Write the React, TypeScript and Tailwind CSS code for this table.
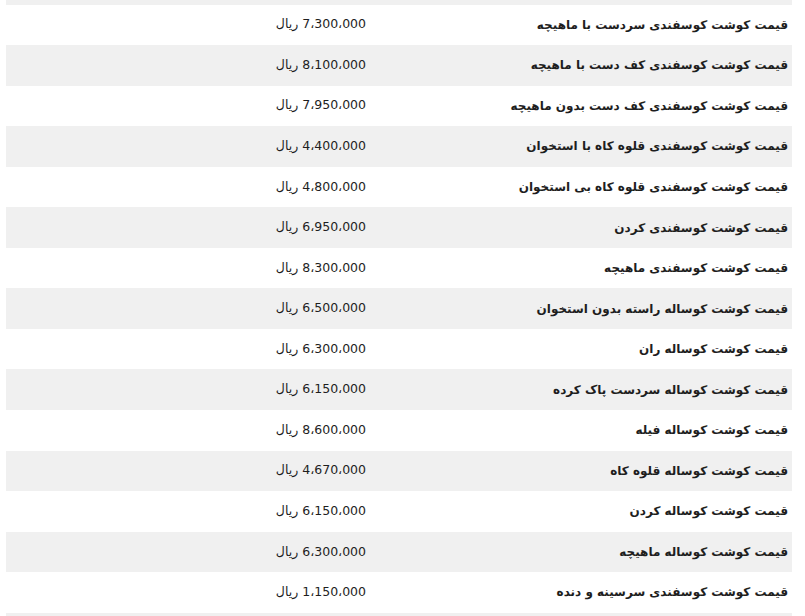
const rows: [string, string][] = [
    ["قیمت کوشت کوسفندی سردست با ماهیچه", "7،300،000"],
    ["قیمت کوشت کوسفندی کف دست با ماهیچه", "8،100،000"],
    ["قیمت کوشت کوسفندی کف دست بدون ماهیچه", "7،950،000"],
    ["قیمت کوشت کوسفندی قلوه کاه با استخوان", "4،400،000"],
    ["قیمت کوشت کوسفندی قلوه کاه بی استخوان", "4،800،000"],
    ["قیمت کوشت کوسفندی کردن", "6،950،000"],
    ["قیمت کوشت کوسفندی ماهیچه", "8،300،000"],
    ["قیمت کوشت کوساله راسته بدون استخوان", "6،500،000"],
    ["قیمت کوشت کوساله ران", "6،300،000"],
    ["قیمت کوشت کوساله سردست پاک کرده", "6،150،000"],
    ["قیمت کوشت کوساله فیله", "8،600،000"],
    ["قیمت کوشت کوساله قلوه کاه", "4،670،000"],
    ["قیمت کوشت کوساله کردن", "6،150،000"],
    ["قیمت کوشت کوساله ماهیچه", "6،300،000"],
    ["قیمت کوشت کوسفندی سرسینه و دنده", "1،150،000"],
];

export default function App() {
    return (
        <div
            className="h-[616px] w-[805px] overflow-hidden bg-white"
            style={{ fontFamily: '"DejaVu Sans", sans-serif' }}
        >
            <div dir="rtl" className="ml-[6px] w-[786px]">
                {/* tail of the previous row */}
                <div className="h-[4.5px] bg-[#f0f0f0]" />
                {rows.map(([name, price], i) => (
                    <div
                        key={i}
                        className={`grid h-[40.55px] grid-cols-[420px_1fr] items-center text-[#1e1e1e] ${
                            i % 2 === 1 ? "bg-[#f0f0f0]" : "bg-white"
                        }`}
                    >
                        <span className="pr-[4px] text-[12px] font-bold">{name}</span>
                        <span className="pr-[6px] text-[12.5px]">
                            {price} ریال
                        </span>
                    </div>
                ))}
                <div className="h-[10px] bg-[#f0f0f0]" />
            </div>
        </div>
    );
}
